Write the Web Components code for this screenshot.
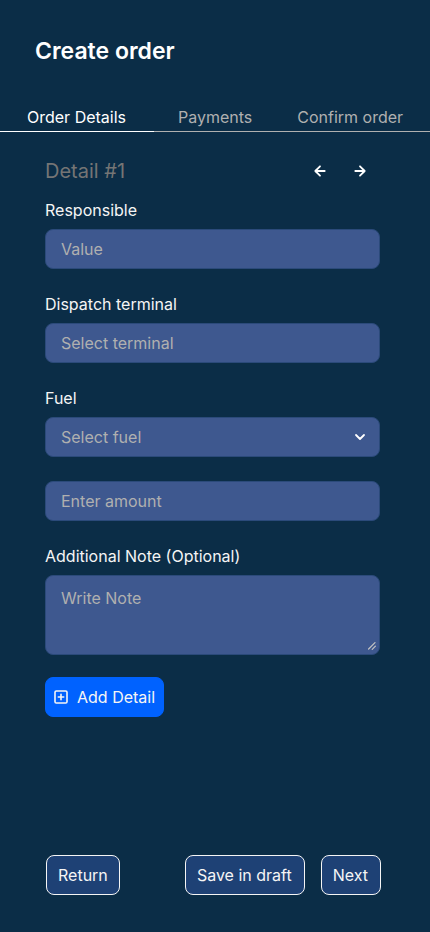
<!DOCTYPE html>
<html lang="en">
<head>
<meta charset="utf-8">
<meta name="viewport" content="width=device-width, initial-scale=1">
<title>Create order</title>
<style>
:root {
  --bg: #0b2d47;
  --field: #3e588f;
  --field-edge: #2b4a7a;
  --muted: #b0b0b0;
  --dim: #757575;
  --text: #f5f5f5;
  --button: #1e4175;
  --primary: #0062ff;
}
body { margin: 0; background: var(--bg); color: var(--text); font: 16px/22px Inter, sans-serif; }
</style>
</head>
<body>
<order-page>
  <order-tabs slot="tabs"></order-tabs>
  <detail-pager slot="form" heading="Detail #1"></detail-pager>
  <form-field slot="form" label="Responsible" placeholder="Value"></form-field>
  <form-field slot="form" label="Dispatch terminal" placeholder="Select terminal"></form-field>
  <form-field slot="form" type="select" label="Fuel" placeholder="Select fuel"></form-field>
  <form-field slot="form" aria="Amount" placeholder="Enter amount"></form-field>
  <form-field slot="form" type="textarea" label="Additional Note (Optional)" placeholder="Write Note"></form-field>
  <action-button slot="form" kind="primary">
    <svg slot="icon" width="16" height="16" viewBox="0 0 16 16" fill="none" stroke="currentColor" stroke-width="1.6" stroke-linecap="round" stroke-linejoin="round" aria-hidden="true"><rect x="2" y="2" width="12" height="12" rx="1.3"/><path d="M8 5.3v5.4M5.3 8h5.4"/></svg>Add Detail</action-button>
  <action-button slot="back">Return</action-button>
  <action-button slot="forward">Save in draft</action-button>
  <action-button slot="forward">Next</action-button>
</order-page>
<script>
class BaseElement extends HTMLElement {
  render(html) {
    this.attachShadow({ mode: 'open' }).innerHTML = '<style>*{box-sizing:border-box}</style>' + html;
  }
}

customElements.define('order-page', class extends BaseElement {
  connectedCallback() {
    this.render(`<style>
      :host { display: flex; flex-direction: column; min-height: 100vh; box-sizing: border-box; padding-bottom: 37px; }
      h1 { margin: 0; padding: 37px 35px 40px; font-size: 23px; line-height: 29px; font-weight: 600; color: #fff; }
      main { display: flex; flex-direction: column; align-items: stretch; gap: 24px; padding: 25px 50px 24px 45px; }
      footer { display: flex; gap: 16px; margin-top: auto; padding: 0 49px 0 46px; }
      .forward { display: flex; gap: 16px; margin-left: auto; }
    </style>
    <header><h1>Create order</h1></header>
    <slot name="tabs"></slot>
    <main><slot name="form"></slot></main>
    <footer><slot name="back"></slot><div class="forward"><slot name="forward"></slot></div></footer>`);
  }
});

customElements.define('order-tabs', class extends BaseElement {
  connectedCallback() {
    this.render(`<style>
      :host { display: block; }
      nav { display: flex; }
      a { flex: 1 0 auto; padding: 0 24px 3px; border-bottom: 1px solid var(--muted); color: var(--muted); text-decoration: none; white-space: nowrap; }
      a:first-child { padding-inline: 27px 28px; }
      a:last-child { padding-inline: 21px 28px; }
      a[aria-current] { color: #fff; border-color: #fff; }
    </style>
    <nav aria-label="Order steps"><a href="#details" aria-current="step">Order Details</a><a href="#payments">Payments</a><a href="#confirm">Confirm order</a></nav>`);
  }
});

customElements.define('detail-pager', class extends BaseElement {
  connectedCallback() {
    this.render(`<style>
      :host { display: flex; align-items: center; height: 28px; margin: 0 0 -10px; }
      h2 { flex: 1; margin: 0; font-size: 20px; line-height: 28px; font-weight: 400; color: var(--dim); }
      .arrows { display: flex; gap: 8px; padding-right: 4px; }
      button { display: grid; place-items: center; width: 32px; height: 28px; padding: 0; border: 0; background: none; color: #fff; }
      svg { fill: none; stroke: currentColor; stroke-width: 1.8; stroke-linecap: round; stroke-linejoin: round; }
    </style>
    <h2>${this.getAttribute('heading')}</h2>
    <div class="arrows">
      <button type="button" aria-label="Previous detail"><svg width="16" height="16" viewBox="0 0 16 16"><path d="M12.7 8H3.3M8 12.7 3.3 8 8 3.3"/></svg></button>
      <button type="button" aria-label="Next detail"><svg width="16" height="16" viewBox="0 0 16 16"><path d="M3.3 8h9.4M8 3.3 12.7 8 8 12.7"/></svg></button>
    </div>`);
  }
});

customElements.define('form-field', class extends BaseElement {
  connectedCallback() {
    const label = this.getAttribute('label');
    const hint = this.getAttribute('placeholder');
    const name = label ? '' : `aria-label="${this.getAttribute('aria')}"`;
    const controls = {
      select: `<select id="control"><option value="">${hint}</option><option>Diesel</option><option>Petrol</option></select>
        <svg class="chevron" width="16" height="16" viewBox="0 0 16 16" aria-hidden="true"><path d="m4 6 4 4 4-4"/></svg>`,
      textarea: `<textarea id="control" placeholder="${hint}"></textarea>
        <svg class="grip" width="8" height="8" viewBox="0 0 8 8" aria-hidden="true"><path d="M.6 7 7 .6M4.2 7.4 7.4 4.2"/></svg>`
    };
    const control = controls[this.getAttribute('type')] || `<input id="control" type="text" placeholder="${hint}" ${name}>`;
    this.render(`<style>
      :host { display: flex; flex-direction: column; gap: 8px; }
      .box { position: relative; display: grid; }
      input, select, textarea { width: 100%; min-width: 0; height: 40px; margin: 0; padding: 0 15px; border: 1px solid var(--field-edge); border-radius: 8px; background: var(--field); color: var(--muted); font: inherit; appearance: none; }
      textarea { height: 80px; padding-block: 11px; resize: none; }
      ::placeholder { color: var(--muted); opacity: 1; }
      svg { position: absolute; fill: none; stroke-linecap: round; stroke-linejoin: round; pointer-events: none; }
      .chevron { right: 12px; top: 12px; stroke: #fff; stroke-width: 1.8; }
      .grip { right: 4px; bottom: 5px; stroke: #c4c4c4; stroke-width: 1.2; }
    </style>
    ${label ? `<label for="control">${label}</label>` : ''}
    <div class="box">${control}</div>`);
  }
});

customElements.define('action-button', class extends BaseElement {
  connectedCallback() {
    this.render(`<style>
      :host { display: flex; }
      button { display: flex; align-items: center; gap: 8px; height: 40px; padding: 0 11px; border: 1px solid var(--text); border-radius: 8px; background: var(--button); color: var(--text); font: inherit; white-space: nowrap; }
      :host([slot="forward"]) button { padding-right: 12px; }
      :host([kind="primary"]) { margin-top: -2px; }
      :host([kind="primary"]) button { padding: 0 8px 0 7px; border-color: var(--primary); background: var(--primary); }
    </style>
    <button type="button"><slot name="icon"></slot><span><slot></slot></span></button>`);
  }
});
</script>
</body>
</html>
